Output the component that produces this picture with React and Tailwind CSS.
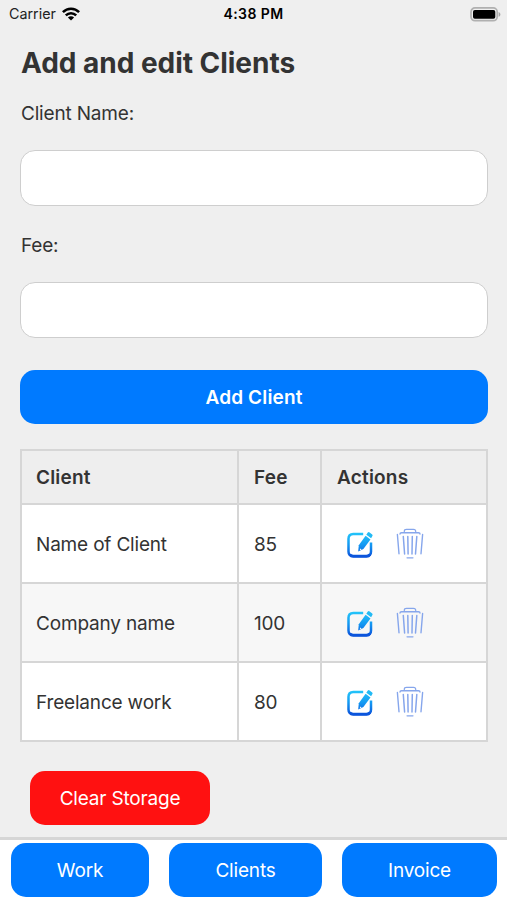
const clients = [
  { name: 'Name of Client', fee: '85' },
  { name: 'Company name', fee: '100' },
  { name: 'Freelance work', fee: '80' },
];

function Wifi() {
  return (
    <svg width="18" height="14" viewBox="0 0 18 14" fill="none" stroke="#000" strokeWidth="2.5">
      <path d="M0.9 5.2C5.4 0.6 12.6 0.6 17.1 5.2" />
      <path d="M3.8 8.3C6.7 5.4 11.3 5.4 14.2 8.3" />
      <path d="M9 13.6L5.9 10.5C7.6 8.9 10.4 8.9 12.1 10.5Z" fill="#000" stroke="none" />
    </svg>
  );
}

function Battery() {
  return (
    <svg width="31" height="15" viewBox="0 0 31 15">
      <rect x="1" y="0.9" width="26.2" height="12.8" rx="4" fill="#efefef" stroke="#b0b0b0" strokeWidth="1.7" />
      <rect x="3" y="2.9" width="22.3" height="8.8" rx="1.8" fill="#000" />
      <path d="M28.6 5v4.8c2.4-.7 2.4-4.1 0-4.8Z" fill="#a6a6a6" />
    </svg>
  );
}

function EditIcon() {
  return (
    <svg width="28" height="28" viewBox="0 0 28 28" fill="none">
      <defs>
        <linearGradient id="editStroke" gradientUnits="userSpaceOnUse" x1="0" y1="1" x2="0" y2="27">
          <stop offset="0" stopColor="#24c8fa" />
          <stop offset="0.5" stopColor="#1498f2" />
          <stop offset="1" stopColor="#0a4cd8" />
        </linearGradient>
      </defs>
      <path d="M17.2 3H7.3Q2.5 3 2.5 7.8V20.5Q2.5 25 7.3 25H20.4Q25 25 25 20.5V11.5" stroke="url(#editStroke)" strokeWidth="2.5" />
      <path d="M3.8 23.5Q5 25.4 7.3 25.4H20.4Q22.8 25.4 23.9 23.5" stroke="#0c55dc" strokeWidth="2.7" />
      <path d="M19.6 4.7L24.5 8.4L17.4 18L12.2 20.6L12.8 14.2Z" fill="url(#editStroke)" />
      <path d="M20.3 3.7L21.8 1.6Q22.6 .7 23.6 1.4L26.2 3.4Q27 4.2 26.4 5.1L25.1 7.2Z" fill="#22baf5" />
      <path d="M14.2 17.5L15.7 18.6L13.8 19.2Z" fill="#fff" />
    </svg>
  );
}

function TrashIcon() {
  return (
    <svg width="28" height="32" viewBox="0 0 28 32" fill="none" stroke="#86a6ec" strokeWidth="1.2" strokeLinecap="round">
      <path d="M8.3 4.3V3.3Q8.3 1.3 10.5 1.3H17.5Q19.7 1.3 19.7 3.3V4.3" />
      <path d="M4 6Q4 4.8 5.5 4.8H22.5Q24 4.8 24 6" strokeWidth="1.4" />
      <path d="M1.4 6.5L3 25.8M26.6 6.5L25 25.8" strokeWidth="1.4" />
      <path d="M7.3 8.5L8.6 26M11.8 8.5L12.1 26M16.3 8.5L16 26M20.8 8.5L19.5 26" strokeWidth="1.5" />
      <path d="M11 29.8H17" />
    </svg>
  );
}

const cell = 'flex items-center border-b-2 border-r-2 border-[#d6d6d6] pl-[14px] pt-[3px]';

export default function App() {
  return (
    <div className="flex h-[900px] w-[507px] flex-col overflow-hidden bg-[#efefef] font-['Inter','Liberation_Sans',sans-serif] text-[19px] tracking-[-0.18px] text-[#333]">
      <header className="grid h-7 shrink-0 grid-cols-3 items-center pl-[9px] pr-[6px] text-sm text-black">
        <div className="flex items-center gap-[6px] text-[#222]">
          <span className="text-[14.3px] tracking-normal">Carrier</span>
          <Wifi />
        </div>
        <span className="-ml-[3px] text-center text-[14px] font-semibold tracking-[0.4px]">4:38 PM</span>
        <div className="flex justify-end"><Battery /></div>
      </header>

      <main className="flex h-[809px] shrink-0 flex-col pl-5 pr-[19px]">
        <h1 className="mt-[17px] h-9 pl-px text-[28px] font-bold leading-9 tracking-[-0.03px]">Add and edit Clients</h1>
        <label htmlFor="name" className="mt-[19px] h-7 pl-px leading-7">Client Name:</label>
        <input id="name" className="mt-[22px] h-[56px] w-full shrink-0 rounded-[15px] border-[1.5px] border-[#cecece] bg-white px-4 outline-none" />
        <label htmlFor="fee" className="mt-[26px] h-7 pl-px leading-7">Fee:</label>
        <input id="fee" className="mt-[22px] h-[56px] w-full shrink-0 rounded-[15px] border-[1.5px] border-[#cecece] bg-white px-4 outline-none" />
        <button className="mt-8 h-[54px] shrink-0 rounded-[15px] bg-[#007aff] pt-[2px] font-semibold tracking-[0.15px] text-white">Add Client</button>

        <section className="mt-[25px] shrink-0 border-l-2 border-t-2 border-[#d6d6d6]">
          <div className="grid h-[54px] grid-cols-[217px_83px_1fr] bg-[#eeeeee] font-semibold tracking-[0.2px]">
            <div className={cell}>Client</div>
            <div className={`${cell} pl-[15px]`}>Fee</div>
            <div className={`${cell} pl-[15px]`}>Actions</div>
          </div>
          {clients.map((client) => (
            <div key={client.name} className="grid h-[79px] grid-cols-[217px_83px_1fr] bg-white odd:bg-[#f7f7f7]">
              <div className={cell}>{client.name}</div>
              <div className={`${cell} pl-[15px]`}>{client.fee}</div>
              <div className="flex items-center gap-[22px] border-b-2 border-r-2 border-[#d6d6d6] pl-[14px]">
                <button aria-label="Edit" className="ml-[10px] pt-[2px]"><EditIcon /></button>
                <button aria-label="Delete"><TrashIcon /></button>
              </div>
            </div>
          ))}
        </section>

        <button className="ml-[10px] mt-[29px] h-[54px] w-[180px] shrink-0 rounded-[15px] bg-[#ff1111] pt-[2px] text-white">Clear Storage</button>
      </main>

      <nav className="flex h-[63px] shrink-0 items-start gap-5 border-t-[3px] border-[#d6d6d6] bg-white pl-[11px] pt-[3px] text-white">
        <button className="h-[54px] w-[138px] rounded-[15px] bg-[#007aff] pt-[3px]">Work</button>
        <button className="h-[54px] w-[153px] rounded-[15px] bg-[#007aff] pt-[3px]">Clients</button>
        <button className="h-[54px] w-[155px] rounded-[15px] bg-[#007aff] pt-[3px]">Invoice</button>
      </nav>
    </div>
  );
}
